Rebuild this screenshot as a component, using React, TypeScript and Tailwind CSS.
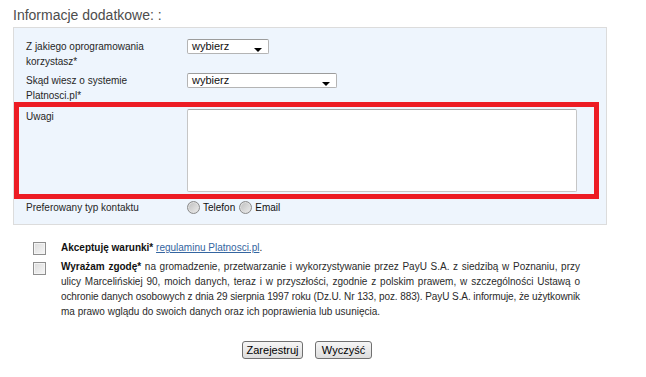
import React from 'react';

const font = { fontFamily: '"Liberation Sans", Arial, sans-serif' };

const FakeSelect: React.FC<{ width: string }> = ({ width }) => (
  <div
    className={`relative h-[15px] ${width} bg-white border border-[#b4b4b4] border-t-[#9c9c9c] rounded-[2px] text-[11px] leading-[13px] text-[#111] pl-[4px]`}
  >
    wybierz
    <span className="absolute right-[6px] top-[8px] w-0 h-0 border-l-[4px] border-r-[4px] border-t-[4px] border-l-transparent border-r-transparent border-t-black" />
  </div>
);

const Radio: React.FC = () => (
  <span className="inline-block w-[13px] h-[13px] rounded-full border border-[#8a8a8a] bg-gradient-to-br from-[#bdbdbd] to-[#eeeeee] shadow-[inset_0_0_0_1px_#e0e0e0]" />
);

const Checkbox: React.FC = () => (
  <span className="block w-[13px] h-[13px] border border-[#8f8f8f] bg-gradient-to-br from-[#dcdcdc] to-[#f6f6f6] shadow-[inset_0_0_0_1px_#f4f4f4] shrink-0" />
);

const Row: React.FC<{ label: React.ReactNode; children: React.ReactNode; className?: string }> = ({
  label,
  children,
  className = '',
}) => (
  <div className={`flex ${className}`}>
    <div className="w-[161px] shrink-0 text-[10px] leading-[15px] text-[#262626]">{label}</div>
    <div>{children}</div>
  </div>
);

export default function App() {
  return (
    <div className="relative w-[646px] h-[377px] bg-white overflow-hidden" style={font}>
      <h2 className="ml-[13px] mt-[7px] mb-[4px] text-[14px] leading-[16px] text-[#4d4d4d]">
        Informacje dodatkowe: :
      </h2>

      <div className="ml-[13px] w-[594px] h-[198px] border border-[#dcdcdc] bg-[#eef5fd] pt-[11px] pl-[12px]">
        <Row
          label={
            <>
              Z jakiego oprogramowania
              <br />
              korzystasz*
            </>
          }
        >
          <FakeSelect width="w-[82px]" />
        </Row>
        <Row
          className="mt-[4px]"
          label={
            <>
              Skąd wiesz o systemie
              <br />
              Platnosci.pl*
            </>
          }
        >
          <FakeSelect width="w-[150px]" />
        </Row>
        <Row className="mt-[6px]" label="Uwagi">
          <div className="w-[390px] h-[83px] bg-white border border-[#c6c6c6] border-t-[#a8a8a8] rounded-[2px]" />
        </Row>
        <Row className="mt-[8px]" label="Preferowany typ kontaktu">
          <div className="flex items-center h-[15px] text-[10px] text-[#111]">
            <Radio />
            <span className="ml-[3px] mr-[4px]">Telefon</span>
            <Radio />
            <span className="ml-[3px]">Email</span>
          </div>
        </Row>
      </div>

      <div className="pl-[33px] mt-[15px] text-[10px] leading-[15px] text-[#2a2a2a]">
        <div className="flex">
          <div className="mt-[2px]">
            <Checkbox />
          </div>
          <p className="ml-[15px]">
            <b className="text-[#111]">Akceptuję warunki*</b>{' '}
            <a href="#" className="underline text-[#3465a0]">
              regulaminu Platnosci.pl
            </a>
            .
          </p>
        </div>
        <div className="flex mt-[4px]">
          <div className="mt-[3px]">
            <Checkbox />
          </div>
          <div className="ml-[15px] w-[519px]">
            <p className="text-justify [text-align-last:justify] whitespace-nowrap">
              <b className="text-[#111]">Wyrażam zgodę*</b> na gromadzenie, przetwarzanie i wykorzystywanie przez
              PayU S.A. z siedzibą w Poznaniu, przy
            </p>
            <p className="text-justify [text-align-last:justify] whitespace-nowrap">
              ulicy Marcelińskiej 90, moich danych, teraz i w przyszłości, zgodnie z polskim prawem, w szczególności
              Ustawą o
            </p>
            <p className="text-justify [text-align-last:justify] whitespace-nowrap tracking-[-0.1px]">
              ochronie danych osobowych z dnia 29 sierpnia 1997 roku (Dz.U. Nr 133, poz. 883). PayU S.A. informuje,
              że użytkownik
            </p>
            <p>ma prawo wglądu do swoich danych oraz ich poprawienia lub usunięcia.</p>
          </div>
        </div>
      </div>

      <div className="flex gap-[12px] pl-[242px] mt-[22px]">
        <button className="w-[61px] h-[18px] rounded-[3px] border border-[#707070] bg-gradient-to-b from-[#f6f6f6] to-[#dddddd] text-[11px] leading-[14px] text-black">
          Zarejestruj
        </button>
        <button className="w-[57px] h-[18px] rounded-[3px] border border-[#707070] bg-gradient-to-b from-[#f6f6f6] to-[#dddddd] text-[11px] leading-[14px] text-black">
          Wyczyść
        </button>
      </div>

      <div className="absolute left-[14px] top-[102px] w-[585px] h-[97px] border-[5px] border-[#ed1c24] pointer-events-none" />
    </div>
  );
}
